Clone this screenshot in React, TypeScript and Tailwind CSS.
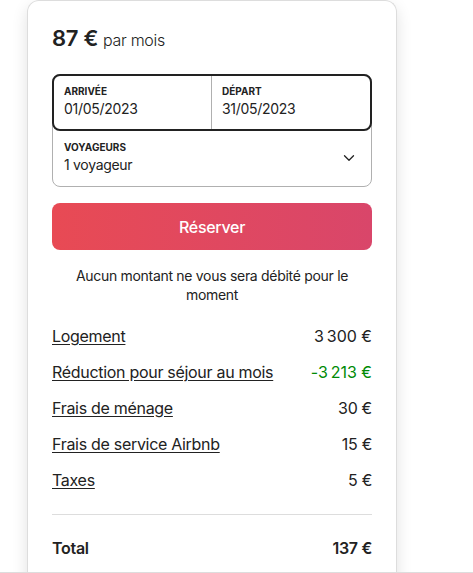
import { ChevronDown } from "lucide-react";

const rows = [
  { label: "Logement", value: "3\u202f300 €" },
  { label: "Réduction pour séjour au mois", value: "-3\u202f213 €", green: true },
  { label: "Frais de ménage", value: "30 €" },
  { label: "Frais de service Airbnb", value: "15 €" },
  { label: "Taxes", value: "5 €" },
];

export default function App() {
  return (
    <div className="relative h-[573px] w-[473px] overflow-hidden bg-white font-['Inter',sans-serif] text-[#222222] tracking-[-0.3px]">
      <div className="ml-[27px] w-[370px] rounded-t-xl border border-b-0 border-[#dddddd] px-6 pt-[21px] pb-6 shadow-[0_6px_16px_rgba(0,0,0,0.12)]">
        {/* Price */}
        <div className="flex items-baseline gap-[5px]">
          <span className="text-[22px] font-semibold">87 €</span>
          <span className="text-[16px] font-light">par mois</span>
        </div>

        {/* Dates + guests */}
        <div className="mt-[19px] rounded-lg border border-[#b0b0b0]">
          <div className="-m-px grid grid-cols-2 rounded-lg border-2 border-[#222222]">
            <div className="border-r border-[#b0b0b0] px-[10px] pt-[9px] pb-[11px]">
              <div className="text-[10px] font-bold leading-3 tracking-normal">ARRIVÉE</div>
              <div className="mt-[3px] text-[14px] leading-[18px]">01/05/2023</div>
            </div>
            <div className="px-[10px] pt-[9px] pb-[11px]">
              <div className="text-[10px] font-bold leading-3 tracking-normal">DÉPART</div>
              <div className="mt-[3px] text-[14px] leading-[18px]">31/05/2023</div>
            </div>
          </div>
          <div className="flex items-center justify-between pl-[11px] pr-[13px] pt-[11px] pb-[12px]">
            <div>
              <div className="text-[10px] font-bold leading-3 tracking-normal">VOYAGEURS</div>
              <div className="mt-[3px] text-[14px] leading-[18px]">1 voyageur</div>
            </div>
            <ChevronDown size={18} strokeWidth={1.75} />
          </div>
        </div>

        {/* Button */}
        <button className="mt-4 h-[47px] w-full rounded-lg bg-gradient-to-r from-[#e84a54] to-[#d9466a] text-[16px] font-medium text-white">
          Réserver
        </button>

        <p className="mt-[16px] px-3 text-center text-[14px] leading-[19px]">
          Aucun montant ne vous sera débité pour le moment
        </p>

        {/* Price rows */}
        <div className="mt-[22px] flex flex-col gap-[16px]">
          {rows.map((r) => (
            <div key={r.label} className="flex justify-between text-[16px] leading-5">
              <span className="underline underline-offset-2">{r.label}</span>
              <span className={r.green ? "text-[#008a05]" : ""}>{r.value}</span>
            </div>
          ))}
        </div>

        <div className="mt-[24px] border-t border-[#dddddd]" />

        <div className="mt-[23px] flex justify-between text-[16px] font-semibold leading-5">
          <span>Total</span>
          <span>137 €</span>
        </div>
      </div>
      <div className="absolute bottom-0 left-0 h-px w-full bg-[#dddddd]" />
    </div>
  );
}
